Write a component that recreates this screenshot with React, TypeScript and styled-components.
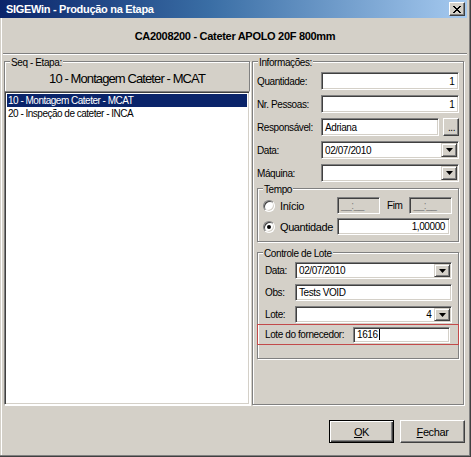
import React from "react";
import styled, { createGlobalStyle } from "styled-components";

const GlobalStyle = createGlobalStyle`
  html, body {
    margin: 0;
    padding: 0;
    background: #d4d0c8;
  }
  body {
    font-family: "Liberation Sans", Arial, sans-serif;
    font-size: 10px;
  }
`;

const Window = styled.div`
  width: 471px;
  height: 457px;
  box-sizing: border-box;
  display: flex;
  flex-direction: column;
  background: #d4d0c8;
  padding: 0 4px 3px 0;
  box-shadow: inset -1px -1px 0 #404040, inset -2px -2px 0 #808080,
    inset 1px 0 0 #d4d0c8, inset 2px 0 0 #fff;
  font-family: "Liberation Sans", Arial, sans-serif;
  font-size: 10px;
  letter-spacing: -0.4px;
  color: #000;
`;

const TitleBar = styled.div`
  flex: none;
  height: 18px;
  display: flex;
  align-items: center;
  justify-content: space-between;
  padding: 0 2px 0 6px;
  background: linear-gradient(to right, #0a246a 0%, #3a6ea5 45%, #a6caf0 100%);
  color: #fff;
  font-weight: bold;
  font-size: 11px;
  letter-spacing: -0.3px;
`;

const CloseButton = styled.div`
  width: 16px;
  height: 14px;
  box-sizing: border-box;
  display: flex;
  align-items: center;
  justify-content: center;
  background: #d4d0c8;
  border: 1px solid;
  border-color: #fff #404040 #404040 #fff;
  box-shadow: inset -1px -1px 0 #808080;
`;

const Content = styled.div`
  flex: 1;
  display: flex;
  flex-direction: column;
  padding-left: 3px;
  min-height: 0;
`;

const Header = styled.div`
  flex: none;
  height: 35px;
  display: flex;
  align-items: center;
  justify-content: center;
  font-weight: bold;
  font-size: 11px;
  letter-spacing: -0.3px;
  border-bottom: 1px solid #808080;
`;

const Body = styled.div`
  flex: none;
  height: 351px;
  box-sizing: border-box;
  display: flex;
  gap: 2px;
  padding: 6px 4px 0 1px;
  border-top: 1px solid #fff;
`;

const Group = styled.div<{ $width?: number }>`
  position: relative;
  box-sizing: border-box;
  ${(p) => (p.$width ? `width: ${p.$width}px;` : "")}
  display: flex;
  flex-direction: column;
  flex-shrink: 0;
  border: 1px solid #808080;
  box-shadow: inset 1px 1px 0 #fff, 1px 1px 0 #fff;
`;

const Legend = styled.span`
  position: absolute;
  top: -6px;
  left: 5px;
  padding: 0 1px;
  line-height: 13px;
  background: #d4d0c8;
`;

const StepGroup = styled(Group)`
  height: 344px;
`;

const StepTitle = styled.div`
  height: 29px;
  display: flex;
  align-items: center;
  justify-content: center;
  padding-top: 3px;
  box-sizing: border-box;
  font-size: 13px;
  letter-spacing: -0.9px;
`;

const ListBox = styled.div`
  flex: 1;
  margin: 0 -1px -1px -1px;
  background: #fff;
  border: 1px solid;
  border-color: #808080 #fff #fff #808080;
  box-shadow: inset 1px 1px 0 #404040, inset -1px -1px 0 #d4d0c8;
  padding: 2px 2px;
`;

const ListRow = styled.div<{ $selected?: boolean }>`
  height: 13px;
  line-height: 13px;
  padding-left: 1px;
  letter-spacing: -0.5px;
  background: ${(p) => (p.$selected ? "#0a246a" : "transparent")};
  color: ${(p) => (p.$selected ? "#fff" : "#000")};
`;

const InfoGroup = styled(Group)`
  flex: 1;
  height: 344px;
  padding: 10px 4px 0 4px;
`;

const FieldRow = styled.div<{ $label?: number }>`
  display: grid;
  grid-template-columns: ${(p) => p.$label ?? 64}px 1fr;
  align-items: center;
  margin-bottom: 5px;
`;

const Field = styled.div<{ $h?: number; $align?: string; $disabled?: boolean }>`
  height: ${(p) => p.$h ?? 18}px;
  box-sizing: border-box;
  display: flex;
  align-items: center;
  justify-content: ${(p) => (p.$align === "right" ? "flex-end" : "flex-start")};
  padding: 0 4px 0 3px;
  background: ${(p) => (p.$disabled ? "#d4d0c8" : "#fff")};
  color: ${(p) => (p.$disabled ? "#808080" : "#000")};
  border: 1px solid;
  border-color: #808080 #fff #fff #808080;
  box-shadow: inset 1px 1px 0 #404040, inset -1px -1px 0 #d4d0c8;
  overflow: hidden;
  white-space: nowrap;
`;

const ComboField = styled(Field)`
  padding-right: 1px;
  justify-content: space-between;
`;

const ComboText = styled.span<{ $align?: string }>`
  flex: 1;
  text-align: ${(p) => p.$align ?? "left"};
  padding-right: 3px;
`;

const DropButton = styled.div`
  width: 16px;
  height: calc(100% - 2px);
  box-sizing: border-box;
  display: flex;
  align-items: center;
  justify-content: center;
  background: #d4d0c8;
  border: 1px solid;
  border-color: #d4d0c8 #404040 #404040 #d4d0c8;
  box-shadow: inset 1px 1px 0 #fff, inset -1px -1px 0 #808080;
`;

const FieldWithButton = styled.div`
  display: flex;
  gap: 4px;
  align-items: center;
`;

const SmallButton = styled.div`
  width: 16px;
  height: 18px;
  box-sizing: border-box;
  display: flex;
  align-items: flex-end;
  justify-content: center;
  padding-bottom: 3px;
  background: #d4d0c8;
  border: 1px solid;
  border-color: #fff #404040 #404040 #fff;
  box-shadow: inset -1px -1px 0 #808080;
  font-size: 10px;
  line-height: 8px;
`;

const TimeGroup = styled(Group)`
  margin-top: 1px;
  padding: 8px 6px 6px 5px;
  gap: 4px;
`;

const TimeRow = styled.div`
  display: grid;
  grid-template-columns: 74px auto;
  align-items: center;
`;

const RadioLabel = styled.label`
  display: flex;
  align-items: center;
  gap: 5px;
  font-size: 11px;
  letter-spacing: -0.4px;
`;

const Radio = styled.span<{ $checked?: boolean }>`
  position: relative;
  width: 12px;
  height: 12px;
  box-sizing: border-box;
  border-radius: 50%;
  background: #fff;
  border: 1px solid;
  border-color: #808080 #fff #fff #808080;
  box-shadow: inset 1px 1px 0 #404040, inset -1px -1px 0 #d4d0c8;
  &::after {
    content: "";
    display: ${(p) => (p.$checked ? "block" : "none")};
    position: absolute;
    left: 3px;
    top: 3px;
    width: 4px;
    height: 4px;
    border-radius: 50%;
    background: #000;
  }
`;

const TimePair = styled.div`
  display: flex;
  align-items: center;
`;

const FimLabel = styled.span`
  margin: 0 7px 0 7px;
`;

const LotGroup = styled(Group)`
  margin-top: 10px;
  padding: 9px 6px 13px 7px;
`;

const HighlightBox = styled.div`
  margin: 1px -7px 0 -8px;
  height: 21px;
  box-sizing: border-box;
  display: grid;
  grid-template-columns: 88px 97px;
  align-items: center;
  padding-left: 7px;
  border: 1px solid #c24a4a;
`;

const Cursor = styled.span`
  display: inline-block;
  width: 1px;
  height: 11px;
  background: #000;
  margin-left: 1px;
`;

const Footer = styled.div`
  flex: 1;
  display: flex;
  justify-content: flex-end;
  align-items: flex-start;
  gap: 6px;
  padding: 15px 2px 0 0;
`;

const Button = styled.div<{ $default?: boolean }>`
  width: 65px;
  height: 23px;
  box-sizing: border-box;
  display: flex;
  align-items: center;
  justify-content: center;
  background: #d4d0c8;
  font-size: 11px;
  letter-spacing: -0.4px;
  border: 1px solid;
  border-color: ${(p) => (p.$default ? "#000" : "#fff #404040 #404040 #fff")};
  box-shadow: ${(p) =>
    p.$default
      ? "inset 1px 1px 0 #fff, inset -1px -1px 0 #404040, inset -2px -2px 0 #808080"
      : "inset -1px -1px 0 #808080"};
`;

const Arrow = () => (
  <svg width="7" height="4" viewBox="0 0 7 4">
    <path d="M0 0h7L3.5 4z" fill="#000" />
  </svg>
);

const CloseGlyph = () => (
  <svg width="8" height="7" viewBox="0 0 8 7" shapeRendering="crispEdges">
    <path d="M0 0h2l2 2.5L6 0h2L5 3.5 8 7H6L4 4.5 2 7H0l3-3.5z" fill="#000" />
  </svg>
);

const Combo = ({ value, align, h }: { value: string; align?: string; h?: number }) => (
  <ComboField $h={h}>
    <ComboText $align={align}>{value}</ComboText>
    <DropButton>
      <Arrow />
    </DropButton>
  </ComboField>
);

export default function App() {
  return (
    <>
      <GlobalStyle />
      <Window>
        <TitleBar>
          <span>SIGEWin - Produção na Etapa</span>
          <CloseButton>
            <CloseGlyph />
          </CloseButton>
        </TitleBar>
        <Content>
          <Header>CA2008200 - Cateter APOLO 20F 800mm</Header>
          <Body>
            <StepGroup $width={246}>
              <Legend>Seq - Etapa:</Legend>
              <StepTitle>10 - Montagem Cateter - MCAT</StepTitle>
              <ListBox>
                <ListRow $selected>10 - Montagem Cateter - MCAT</ListRow>
                <ListRow>20 - Inspeção de cateter - INCA</ListRow>
              </ListBox>
            </StepGroup>

            <InfoGroup>
              <Legend>Informações:</Legend>
              <FieldRow>
                <span>Quantidade:</span>
                <Field $align="right">1</Field>
              </FieldRow>
              <FieldRow>
                <span>Nr. Pessoas:</span>
                <Field $align="right">1</Field>
              </FieldRow>
              <FieldRow>
                <span>Responsável:</span>
                <FieldWithButton>
                  <Field style={{ flex: 1 }}>Adriana</Field>
                  <SmallButton>...</SmallButton>
                </FieldWithButton>
              </FieldRow>
              <FieldRow>
                <span>Data:</span>
                <Combo value="02/07/2010" />
              </FieldRow>
              <FieldRow>
                <span>Máquina:</span>
                <Combo value="" />
              </FieldRow>

              <TimeGroup>
                <Legend>Tempo</Legend>
                <TimeRow>
                  <RadioLabel>
                    <Radio />
                    Início
                  </RadioLabel>
                  <TimePair>
                    <Field $h={17} $disabled style={{ width: 43 }}>
                      __:__
                    </Field>
                    <FimLabel>Fim</FimLabel>
                    <Field $h={17} $disabled style={{ width: 43 }}>
                      __:__
                    </Field>
                  </TimePair>
                </TimeRow>
                <TimeRow>
                  <RadioLabel>
                    <Radio $checked />
                    Quantidade
                  </RadioLabel>
                  <Field $h={17} $align="right" style={{ width: 113 }}>
                    1,00000
                  </Field>
                </TimeRow>
              </TimeGroup>

              <LotGroup>
                <Legend>Controle de Lote</Legend>
                <FieldRow $label={30}>
                  <span>Data:</span>
                  <Combo value="02/07/2010" h={17} />
                </FieldRow>
                <FieldRow $label={30}>
                  <span>Obs:</span>
                  <Field $h={17}>Tests VOID</Field>
                </FieldRow>
                <FieldRow $label={30} style={{ marginBottom: 0 }}>
                  <span>Lote:</span>
                  <Combo value="4" align="right" h={17} />
                </FieldRow>
                <HighlightBox>
                  <span>Lote do fornecedor:</span>
                  <Field $h={16}>
                    1616
                    <Cursor />
                  </Field>
                </HighlightBox>
              </LotGroup>
            </InfoGroup>
          </Body>
          <Footer>
            <Button $default>
              <span>
                <u>O</u>K
              </span>
            </Button>
            <Button>
              <span>
                <u>F</u>echar
              </span>
            </Button>
          </Footer>
        </Content>
      </Window>
    </>
  );
}
